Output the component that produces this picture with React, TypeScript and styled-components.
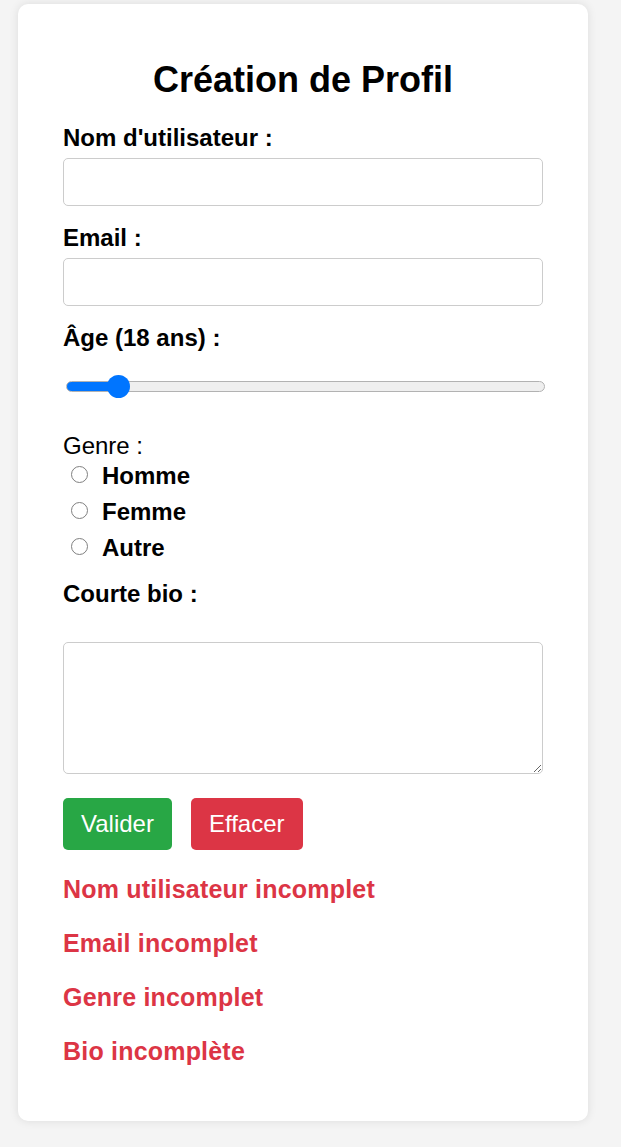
import React, { useState } from "react";
import styled, { createGlobalStyle } from "styled-components";

const GlobalStyle = createGlobalStyle`
  html, body {
    margin: 0;
    padding: 0;
    background: #f4f4f4;
    font-family: "Liberation Sans", Arial, Helvetica, sans-serif;
  }
  * { box-sizing: border-box; }
`;

const Page = styled.div`
  padding: 4px 33px 26px 18px;
`;

const Card = styled.form`
  width: 570px;
  background: #ffffff;
  border-radius: 10px;
  box-shadow: 0 0 10px rgba(0, 0, 0, 0.1);
  padding: 55px 45px 56px;
  display: flex;
  flex-direction: column;
`;

const Title = styled.h1`
  margin: 0 0 24px;
  font-size: 36px;
  line-height: 41px;
  font-weight: 700;
  text-align: center;
  color: #000;
`;

const Group = styled.div<{ $gap?: number; $after?: number }>`
  display: flex;
  flex-direction: column;
  gap: ${(p) => p.$gap ?? 6}px;
  margin-bottom: ${(p) => p.$after ?? 18}px;
`;

const Label = styled.label<{ $plain?: boolean }>`
  font-size: 24px;
  line-height: 28px;
  font-weight: ${(p) => (p.$plain ? 400 : 700)};
  color: #000;
`;

const TextInput = styled.input`
  width: 480px;
  height: 48px;
  border: 1px solid #cccccc;
  border-radius: 5px;
  padding: 0 12px;
  font-family: inherit;
  font-size: 20px;
  outline: none;
`;

const Range = styled.input<{ $fill: number }>`
  -webkit-appearance: none;
  appearance: none;
  width: 479px;
  height: 24px;
  margin: 22px 0 34px 3px;
  background: transparent;
  outline: none;

  &::-webkit-slider-runnable-track {
    height: 11px;
    border-radius: 6px;
    border: 1px solid #b2b2b2;
    background: linear-gradient(
      to right,
      #0075ff ${(p) => p.$fill}px,
      #efefef ${(p) => p.$fill}px
    );
  }
  &::-webkit-slider-thumb {
    -webkit-appearance: none;
    appearance: none;
    width: 23px;
    height: 23px;
    border-radius: 50%;
    background: #0075ff;
    border: none;
    margin-top: -7px;
  }
`;

const RadioList = styled.div`
  display: flex;
  flex-direction: column;
  gap: 8px;
`;

const RadioRow = styled.label`
  display: flex;
  align-items: flex-start;
  font-size: 24px;
  line-height: 28px;
  font-weight: 700;
  color: #000;
`;

const Radio = styled.input`
  -webkit-appearance: none;
  appearance: none;
  width: 17px;
  height: 17px;
  margin: 4px 14px 0 8px;
  border: 1.5px solid #808080;
  border-radius: 50%;
  background: #fff;
  flex-shrink: 0;

  &:checked {
    border-color: #0075ff;
    background: radial-gradient(circle, #0075ff 0 4px, #fff 4.5px);
  }
`;

const TextArea = styled.textarea`
  width: 480px;
  height: 132px;
  border: 1px solid #cccccc;
  border-radius: 5px;
  padding: 8px 12px;
  font-family: inherit;
  font-size: 20px;
  resize: both;
  outline: none;
  display: block;
`;

const Actions = styled.div`
  display: flex;
  gap: 19px;
  margin-top: 6px;
`;

const Button = styled.button<{ $tone: "ok" | "danger" }>`
  height: 52px;
  padding: 0 18px;
  border: none;
  border-radius: 5px;
  background: ${(p) => (p.$tone === "ok" ? "#28a745" : "#dc3545")};
  color: #fff;
  font-family: inherit;
  font-size: 24px;
  line-height: 28px;
  cursor: pointer;
`;

const Errors = styled.div`
  display: flex;
  flex-direction: column;
  gap: 26px;
  margin-top: 25px;
`;

const ErrorText = styled.p`
  margin: 0;
  font-size: 25px;
  line-height: 28px;
  letter-spacing: 0.2px;
  font-weight: 700;
  color: #dc3545;
`;

const MIN = 10;
const MAX = 100;
const TRACK = 479;
const THUMB = 23;

export default function App() {
  const [age, setAge] = useState(18);
  const [genre, setGenre] = useState("");
  const ratio = (age - MIN) / (MAX - MIN);
  const fill = Math.round(THUMB / 2 + ratio * (TRACK - THUMB)) - 1;

  return (
    <>
      <GlobalStyle />
      <Page>
        <Card onSubmit={(e) => e.preventDefault()}>
          <Title>Création de Profil</Title>

          <Group>
            <Label htmlFor="user">Nom d'utilisateur :</Label>
            <TextInput id="user" type="text" />
          </Group>

          <Group>
            <Label htmlFor="email">Email :</Label>
            <TextInput id="email" type="email" />
          </Group>

          <Group $gap={0} $after={0}>
            <Label htmlFor="age">Âge ({age} ans) :</Label>
            <Range
              id="age"
              type="range"
              min={MIN}
              max={MAX}
              value={age}
              $fill={fill}
              onChange={(e) => setAge(Number(e.target.value))}
            />
          </Group>

          <Group $gap={2}>
            <Label as="span" $plain>
              Genre :
            </Label>
            <RadioList>
              {["Homme", "Femme", "Autre"].map((g) => (
                <RadioRow key={g}>
                  <Radio
                    type="radio"
                    name="genre"
                    value={g}
                    checked={genre === g}
                    onChange={() => setGenre(g)}
                  />
                  {g}
                </RadioRow>
              ))}
            </RadioList>
          </Group>

          <Group $gap={34}>
            <Label htmlFor="bio">Courte bio :</Label>
            <TextArea id="bio" />
          </Group>

          <Actions>
            <Button type="submit" $tone="ok">
              Valider
            </Button>
            <Button type="reset" $tone="danger">
              Effacer
            </Button>
          </Actions>

          <Errors>
            <ErrorText>Nom utilisateur incomplet</ErrorText>
            <ErrorText>Email incomplet</ErrorText>
            <ErrorText>Genre incomplet</ErrorText>
            <ErrorText>Bio incomplète</ErrorText>
          </Errors>
        </Card>
      </Page>
    </>
  );
}
